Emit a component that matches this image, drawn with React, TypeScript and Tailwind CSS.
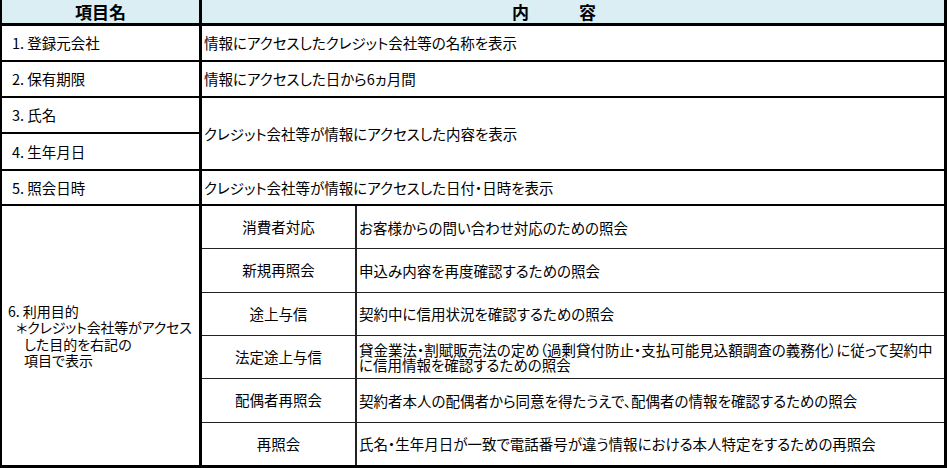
const font = "font-['Noto_Sans_CJK_JP','Noto_Sans',sans-serif] [font-feature-settings:'palt']"

const purposes = [
  { label: '消費者対応', text: 'お客様からの問い合わせ対応のための照会' },
  { label: '新規再照会', text: '申込み内容を再度確認するための照会' },
  { label: '途上与信', text: '契約中に信用状況を確認するための照会' },
  {
    label: '法定途上与信',
    text: (
      <>
        貸金業法・割賦販売法の定め（過剰貸付防止・支払可能見込額調査の義務化）に従って契約中
        <br />
        に信用情報を確認するための照会
      </>
    ),
  },
  { label: '配偶者再照会', text: '契約者本人の配偶者から同意を得たうえで、配偶者の情報を確認するための照会' },
  { label: '再照会', text: '氏名・生年月日が一致で電話番号が違う情報における本人特定をするための再照会' },
]

function Row({ label, text, h }: { label: string; text: string; h: string }) {
  return (
    <div className={`flex ${h} border-b-2 border-black`}>
      <div className="w-[200px] border-r-[3px] border-black flex items-center pl-[10px]">{label}</div>
      <div className="flex-1 flex items-center pl-[2px]">{text}</div>
    </div>
  )
}

export default function App() {
  return (
    <div className={`w-[951px] h-[468px] bg-white text-black text-[14.5px] leading-[16px] ${font}`}>
      <div className="w-[947px] border-l-2 border-r-[3px] border-b-[3px] border-black">
        {/* header */}
        <div className="flex h-[26px] border-b-[3px] border-black bg-[#daeef3] text-[17px] font-bold">
          <div className="w-[200px] border-r-[3px] border-black flex items-center justify-center">項目名</div>
          <div className="flex-1 flex items-center justify-center gap-[50px] pr-[38px]">
            <span>内</span>
            <span>容</span>
          </div>
        </div>

        <Row h="h-[36px]" label="1. 登録元会社" text="情報にアクセスしたクレジット会社等の名称を表示" />
        <Row h="h-[36px]" label="2. 保有期限" text="情報にアクセスした日から6ヵ月間" />

        {/* rows 3 and 4 share one content cell */}
        <div className="flex h-[73px] border-b-2 border-black">
          <div className="w-[200px] border-r-[3px] border-black flex flex-col">
            <div className="h-[36px] border-b-2 border-black flex items-center pl-[10px]">3. 氏名</div>
            <div className="flex-1 flex items-center pl-[10px]">4. 生年月日</div>
          </div>
          <div className="flex-1 flex items-center pl-[2px]">クレジット会社等が情報にアクセスした内容を表示</div>
        </div>

        <Row h="h-[35px]" label="5. 照会日時" text="クレジット会社等が情報にアクセスした日付・日時を表示" />

        {/* row 6 */}
        <div className="flex h-[259px]">
          <div className="w-[200px] border-r-[3px] border-black flex flex-col justify-center pl-[6px] text-[14px] leading-[16.5px] whitespace-nowrap">
            <div>6. 利用目的</div>
            <div className="pl-[8px] tracking-[-0.2px]">＊クレジット会社等がアクセス</div>
            <div className="pl-[16px]">した目的を右記の</div>
            <div className="pl-[16px]">項目で表示</div>
          </div>
          <div className="flex-1 flex flex-col">
            {purposes.map((p, i) => (
              <div
                key={p.label}
                className={`flex flex-1 ${i < purposes.length - 1 ? 'border-b border-[#222]' : ''}`}
              >
                <div className="w-[155px] border-r-2 border-[#222] flex items-center justify-center">{p.label}</div>
                <div className="flex-1 flex items-center pl-[2px] whitespace-nowrap leading-[15px]">
                  <div>{p.text}</div>
                </div>
              </div>
            ))}
          </div>
        </div>
      </div>
    </div>
  )
}
